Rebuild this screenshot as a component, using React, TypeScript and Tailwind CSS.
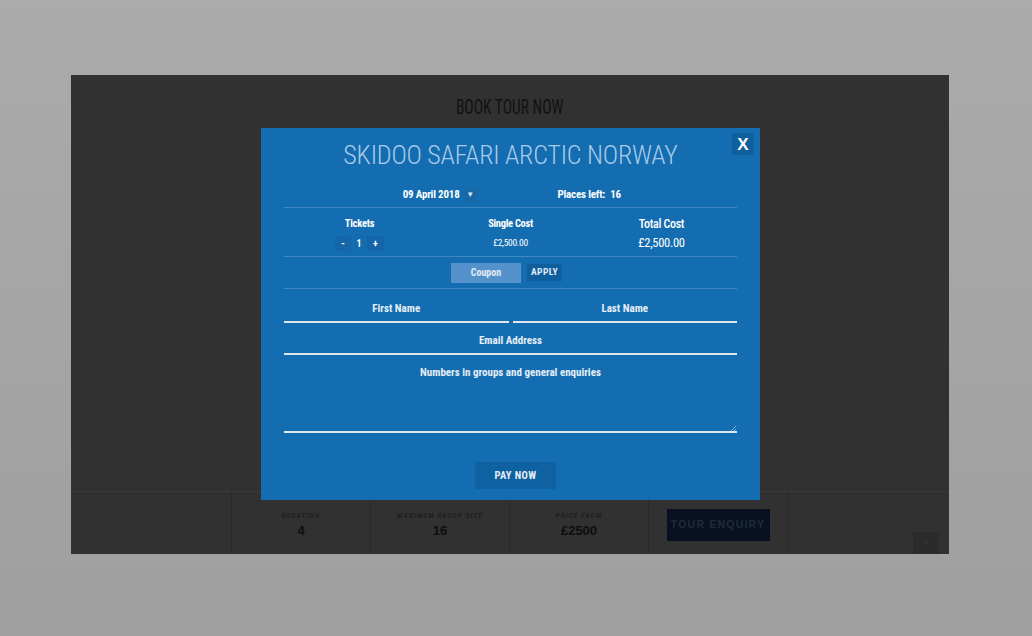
import { ChevronUp } from "lucide-react";

const narrow = "font-['Roboto_Condensed','Liberation_Sans_Narrow','Roboto',sans-serif]";

const stats = [
  { label: "DURATION", value: "4" },
  { label: "MAXIMUM GROUP SIZE", value: "16" },
  { label: "PRICE FROM", value: "£2500" },
];

const UnderlineField = ({ label, tall }: { label: string; tall?: boolean }) => (
  <div className="flex flex-1 flex-col">
    <div className={`flex h-[20px] items-center justify-center text-[11px] font-bold text-[#e6eef7] ${tall ? "mb-[48px]" : "mb-[2px]"}`}>
      {label}
    </div>
    <div className="h-[2px] bg-[#dfe8f1]" />
  </div>
);

const BookingModal = () => (
  <div className={`absolute left-[190px] top-[53px] flex h-[372px] w-[499px] flex-col bg-[#136db0] px-[23px] ${narrow}`}>
    <button className="absolute right-[6px] top-[5px] flex h-[22px] w-[22px] items-center justify-center bg-[#0e5f9e] text-[17px] font-bold leading-none text-white font-['Liberation_Sans',sans-serif]">
      X
    </button>

    <div className="flex h-[52px] items-center justify-center pt-[2px] text-[26px] font-light tracking-[-0.2px] text-[#a9cbea]">
      SKIDOO SAFARI ARCTIC NORWAY
    </div>

    <div className="flex h-[28px] items-center border-b border-[#3f88c3] pt-[3px] text-[11px] font-bold tracking-[-0.2px] text-white">
      <div className="flex w-1/2 items-center justify-end gap-[5px] pr-[35px]">
        <span>09 April 2018</span>
        <span className="flex h-[13px] w-[11px] items-center justify-center bg-[#1a67a6] text-[8px] text-[#d8e4f0]">▼</span>
      </div>
      <div className="flex w-1/2 items-center pl-[47px]">
        <span>Places left:</span>
        <span className="ml-[5px]">16</span>
      </div>
    </div>

    <div className="grid h-[49px] grid-cols-3 border-b border-[#3f88c3] pt-[8px] text-white">
      <div className="flex flex-col items-center">
        <span className="h-[16px] text-[10.5px] font-bold leading-[16px] tracking-[-0.2px]">Tickets</span>
        <div className="mt-[3px] flex h-[16px] items-center gap-[3px] text-[10px] font-bold">
          <span className="flex h-[15px] w-[16px] items-center justify-center bg-[#1566a8]">-</span>
          <span className="w-[10px] text-center">1</span>
          <span className="flex h-[15px] w-[17px] items-center justify-center bg-[#1566a8]">+</span>
        </div>
      </div>
      <div className="flex flex-col items-center">
        <span className="h-[16px] text-[10.5px] font-bold leading-[16px] tracking-[-0.3px]">Single Cost</span>
        <span className="mt-[3px] h-[16px] text-[9.5px] leading-[16px] tracking-[-0.3px]">£2,500.00</span>
      </div>
      <div className="flex flex-col items-center">
        <span className="h-[16px] text-[12px] font-medium leading-[16px] tracking-[-0.3px]">Total Cost</span>
        <span className="mt-[3px] h-[16px] text-[12.5px] leading-[16px] tracking-[-0.3px]">£2,500.00</span>
      </div>
    </div>

    <div className="flex h-[32px] items-center justify-center gap-[6px] border-b border-[#3f88c3] pr-[8px]">
      <div className="flex h-[20px] w-[70px] items-center justify-center bg-[#5592cc] text-[10px] font-bold text-[#e2ebf4]">
        Coupon
      </div>
      <div className="flex h-[17px] w-[35px] items-center justify-center bg-[#0f5f9f] text-[9.5px] font-bold tracking-[0.4px] text-[#e2ebf4]">
        APPLY
      </div>
    </div>

    <div className="flex gap-[4px] pt-[10px]">
      <UnderlineField label="First Name" />
      <UnderlineField label="Last Name" />
    </div>

    <div className="flex pt-[8px]">
      <UnderlineField label="Email Address" />
    </div>

    <div className="relative flex pt-[8px]">
      <UnderlineField label="Numbers in groups and general enquiries" tall />
      {/* textarea resize grip */}
      <svg className="absolute bottom-[2px] right-[1px]" width="6" height="6" viewBox="0 0 6 6">
        <path d="M1 6 L6 1 M4 6 L6 4" stroke="#9fbfdc" strokeWidth="0.8" />
      </svg>
    </div>

    <div className="mt-[29px] flex justify-center pl-[10px]">
      <button className="flex h-[27px] w-[81px] items-center justify-center bg-[#0f62a2] text-[10.5px] font-bold tracking-[0.4px] text-[#e6eef7]">
        PAY NOW
      </button>
    </div>
  </div>
);

export default function App() {
  return (
    <div className="h-[636px] w-[1032px] overflow-hidden bg-[linear-gradient(180deg,#ababab,#9f9f9f)] pl-[71px] pt-[75px]">
      <div className="relative flex h-[479px] w-[878px] flex-col bg-[#313131]">
        <div className={`flex h-[63px] items-end justify-center pb-[19px] text-[21px] font-normal leading-[24px] text-[#111111] ${narrow}`}>
          <span className="scale-x-[0.74]">BOOK TOUR NOW</span>
        </div>

        <div className="mt-auto flex h-[63px] border-t border-[#393939]">
          <div className="w-[161px] border-r border-[#2a2a2a]" />
          {stats.map((s) => (
            <div key={s.label} className="flex w-[139px] flex-col items-center border-r border-[#2a2a2a] pt-[19px]">
              <span className={`text-[7px] font-bold italic tracking-[1.2px] text-[#1f1f1f] ${narrow}`}>{s.label}</span>
              <span className="text-[13px] font-bold leading-[17px] text-[#0e0e0e] font-['Liberation_Sans',sans-serif]">{s.value}</span>
            </div>
          ))}
          <div className="flex w-[139px] items-start justify-center border-r border-[#2a2a2a] pt-[17px]">
            <div className="flex h-[32px] w-[103px] items-center justify-center bg-[#08111f] text-[10.5px] font-bold tracking-[1.2px] text-[#1f2b3c] font-['Liberation_Sans',sans-serif]">
              TOUR ENQUIRY
            </div>
          </div>
          <div className="flex flex-1 items-end justify-end pr-[10px]">
            <div className="flex h-[22px] w-[26px] items-center justify-center bg-[#2b2b2b]">
              <ChevronUp size={10} className="text-[#3a3a3a]" />
            </div>
          </div>
        </div>

        <BookingModal />
      </div>
    </div>
  );
}
